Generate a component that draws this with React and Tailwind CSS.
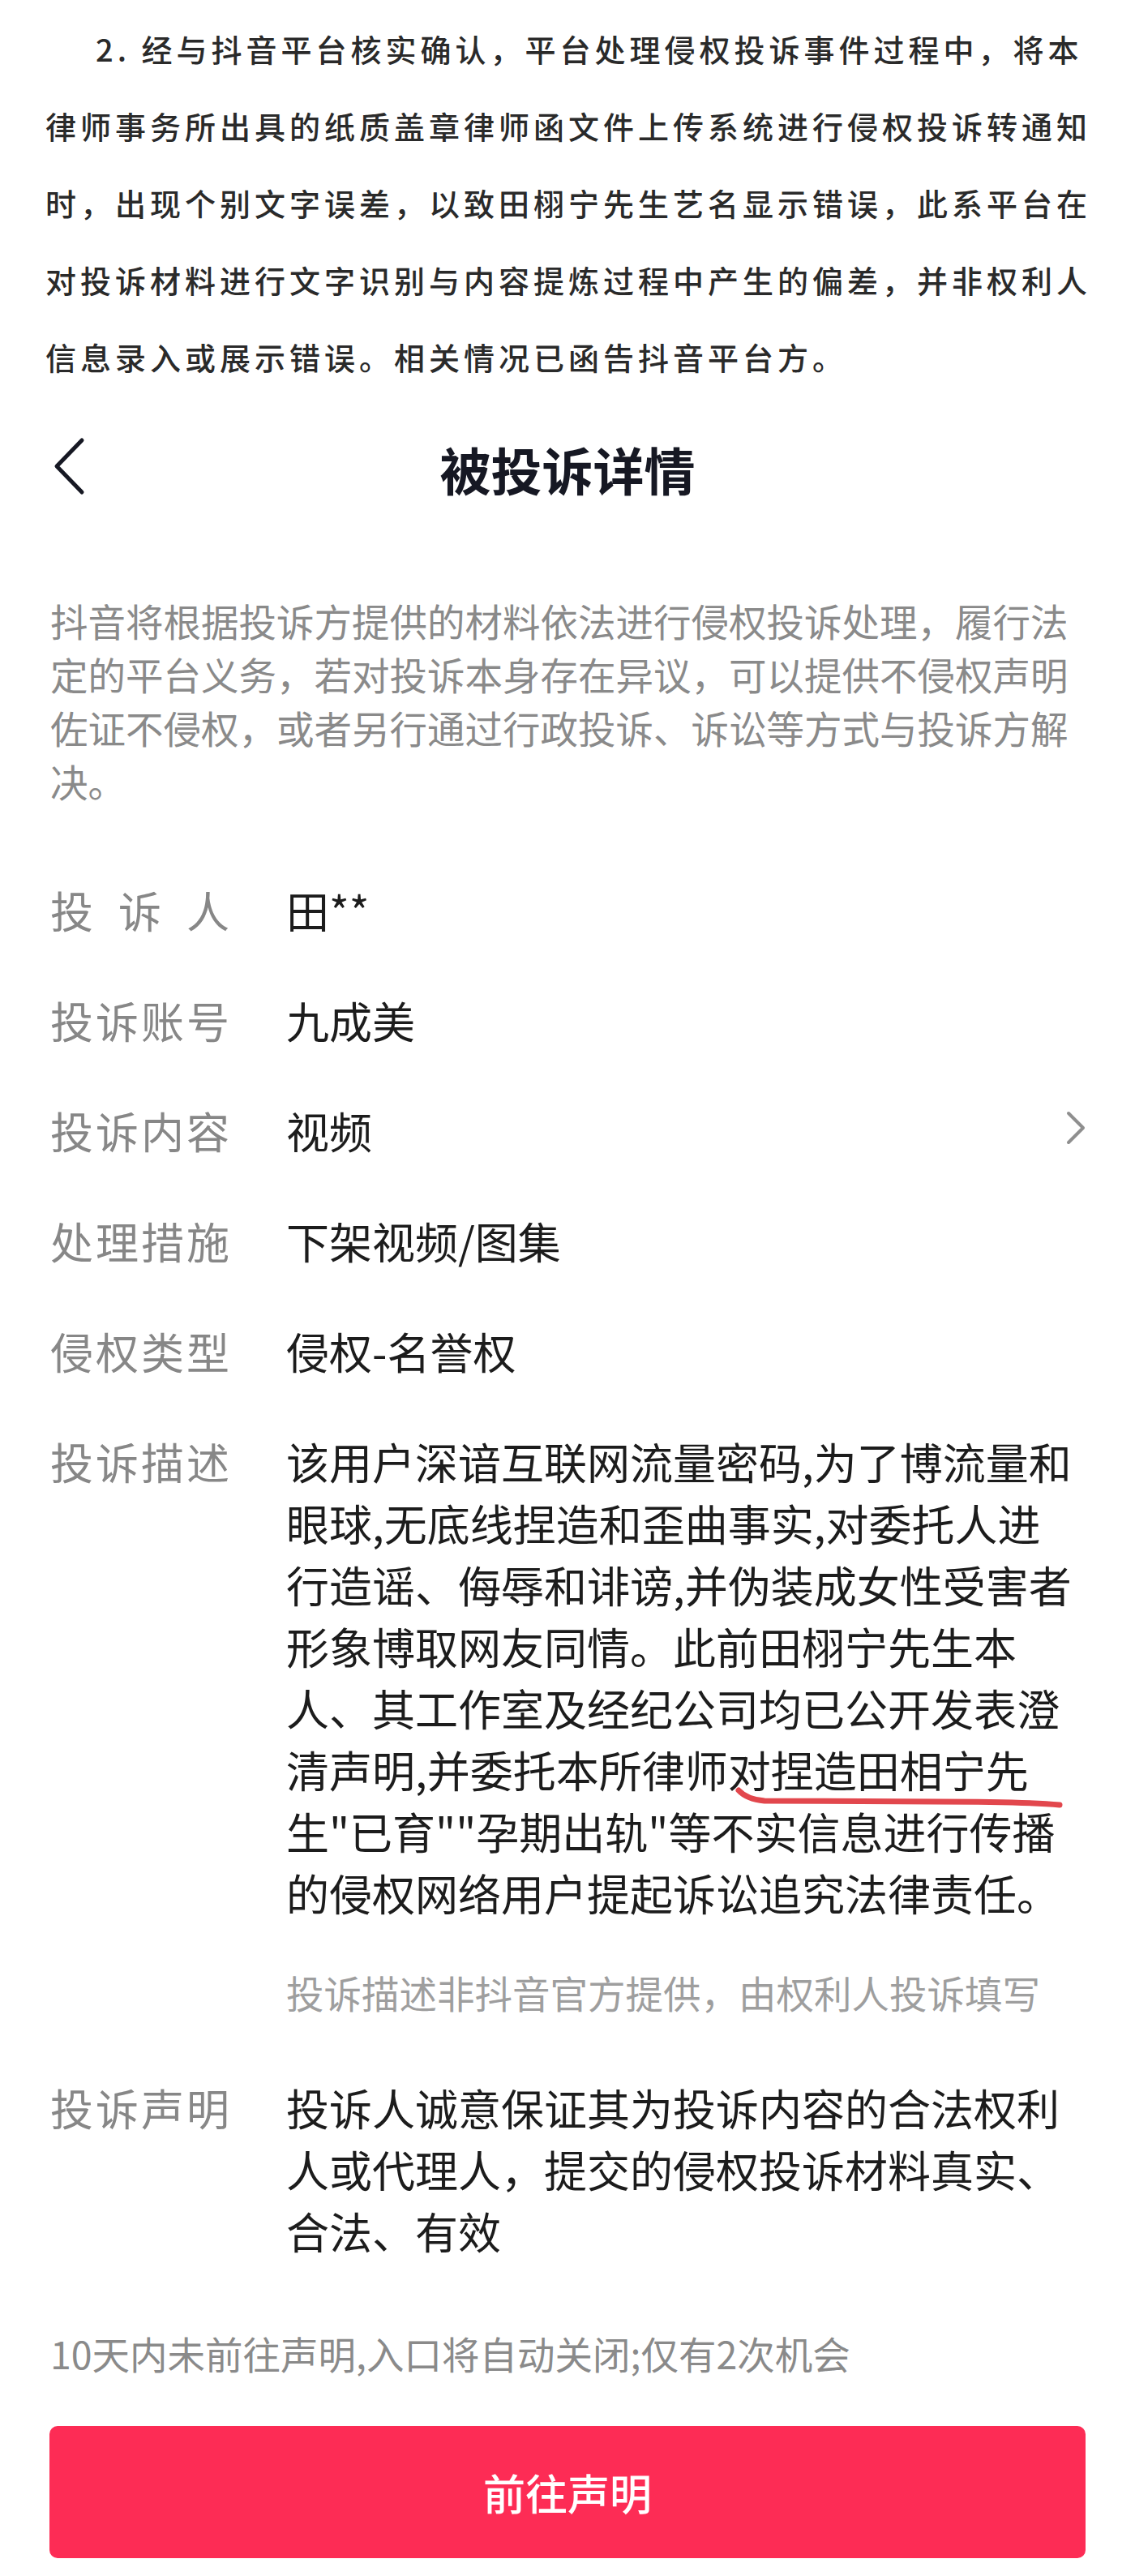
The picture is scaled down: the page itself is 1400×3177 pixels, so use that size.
import React from "react";

const docLines = [
  "律师事务所出具的纸质盖章律师函文件上传系统进行侵权投诉转通知",
  "时，出现个别文字误差，以致田栩宁先生艺名显示错误，此系平台在",
  "对投诉材料进行文字识别与内容提炼过程中产生的偏差，并非权利人",
  "信息录入或展示错误。相关情况已函告抖音平台方。",
];

const introLines = [
  "抖音将根据投诉方提供的材料依法进行侵权投诉处理，履行法",
  "定的平台义务，若对投诉本身存在异议，可以提供不侵权声明",
  "佐证不侵权，或者另行通过行政投诉、诉讼等方式与投诉方解",
  "决。",
];

const descLines = [
  "该用户深谙互联网流量密码,为了博流量和",
  "眼球,无底线捏造和歪曲事实,对委托人进",
  "行造谣、侮辱和诽谤,并伪装成女性受害者",
  "形象博取网友同情。此前田栩宁先生本",
  "人、其工作室及经纪公司均已公开发表澄",
  "清声明,并委托本所律师对捏造田相宁先",
  '生"已育""孕期出轨"等不实信息进行传播',
  "的侵权网络用户提起诉讼追究法律责任。",
];

const stmtLines = [
  "投诉人诚意保证其为投诉内容的合法权利",
  "人或代理人，提交的侵权投诉材料真实、",
  "合法、有效",
];

function Label({ children }) {
  return (
    <div className="w-[291px] shrink-0 text-[#878787] tracking-[3px]">{children}</div>
  );
}

function Row({ label, children }) {
  return (
    <div className="flex items-start leading-[76px] text-[53px]">
      {label}
      <div className="flex-1 text-[#1c1c1c]">{children}</div>
    </div>
  );
}

export default function App() {
  return (
    <div className="w-[1400px] h-[3177px] overflow-hidden bg-white font-['Noto_Sans_CJK_SC','Noto_Sans',sans-serif]">
      {/* scanned document paragraph */}
      <div className="pt-[12px] pl-[56px] text-[38px] leading-[95px] tracking-[5px] font-medium text-[#2a2a2a] whitespace-nowrap">
        <div className="pl-[62px]">2. 经与抖音平台核实确认，平台处理侵权投诉事件过程中，将本</div>
        {docLines.map((l) => (
          <div key={l}>{l}</div>
        ))}
      </div>

      {/* header */}
      <div className="mt-[35px] h-[110px] px-[60px] grid grid-cols-[1fr_auto_1fr] items-center">
        <svg width="48" height="76" viewBox="0 0 48 76" fill="none">
          <path d="M41 4 L10 36 L41 68" stroke="#161823" strokeWidth="5" strokeLinecap="round" strokeLinejoin="round" />
        </svg>
        <div className="text-[63px] font-bold leading-none text-[#161823]">被投诉详情</div>
        <div />
      </div>

      {/* intro */}
      <div className="mt-[100px] px-[62px] text-[46.5px] leading-[66px] text-[#8a8a8a] whitespace-nowrap">
        {introLines.map((l) => (
          <div key={l}>{l}</div>
        ))}
      </div>

      {/* rows */}
      <div className="mt-[88px] px-[62px] flex flex-col gap-[60px] whitespace-nowrap">
        <Row
          label={
            <div className="w-[291px] shrink-0 text-[#878787]">
              <div className="w-[221px] flex justify-between">
                <span>投</span>
                <span>诉</span>
                <span>人</span>
              </div>
            </div>
          }
        >
          田**
        </Row>
        <Row label={<Label>投诉账号</Label>}>九成美</Row>
        <Row label={<Label>投诉内容</Label>}>
          <div className="flex items-center justify-between">
            <span>视频</span>
            <svg width="26" height="42" viewBox="0 0 26 42" fill="none" className="mr-[-2px] -mt-[6px]">
              <path d="M4 3 L22 21 L4 39" stroke="#8f8f8f" strokeWidth="4" strokeLinecap="round" strokeLinejoin="round" />
            </svg>
          </div>
        </Row>
        <Row label={<Label>处理措施</Label>}>下架视频/图集</Row>
        <Row label={<Label>侵权类型</Label>}>侵权-名誉权</Row>
        <Row label={<Label>投诉描述</Label>}>
          <div className="relative">
            {descLines.map((l) => (
              <div key={l}>{l}</div>
            ))}
            <svg
              width="410"
              height="32"
              viewBox="0 0 410 32"
              fill="none"
              className="absolute left-[552px] top-[436px]"
            >
              <path
                d="M6 8 Q 16 19 38 21 L 250 22 Q 360 22 402 26"
                stroke="#e2474d"
                strokeWidth="7"
                strokeLinecap="round"
              />
            </svg>
          </div>
          <div className="mt-[52px] text-[46.5px] leading-[66px] text-[#9e9e9e]">
            投诉描述非抖音官方提供，由权利人投诉填写
          </div>
        </Row>
        <div className="mt-[11px]">
          <Row label={<Label>投诉声明</Label>}>
            {stmtLines.map((l) => (
              <div key={l}>{l}</div>
            ))}
          </Row>
        </div>
      </div>

      {/* footer note */}
      <div className="mt-[80px] px-[62px] text-[46.5px] leading-[66px] text-[#8a8a8a] whitespace-nowrap">
        10天内未前往声明,入口将自动关闭;仅有2次机会
      </div>

      {/* button */}
      <div className="mt-[57px] px-[61px]">
        <div className="h-[163px] rounded-[10px] bg-[#fd2c55] flex items-center justify-center text-white text-[52px] font-medium">
          前往声明
        </div>
      </div>
    </div>
  );
}
